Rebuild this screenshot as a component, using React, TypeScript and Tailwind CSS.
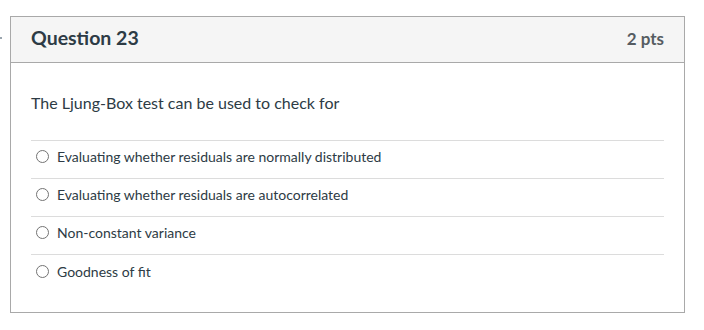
import React from "react";

const answers = [
  "Evaluating whether residuals are normally distributed",
  "Evaluating whether residuals are autocorrelated",
  "Non-constant variance",
  "Goodness of fit",
];

export default function App() {
  return (
    <div
      className="relative w-[704px] h-[330px] bg-white pt-[16px] pl-[10px]"
      style={{ fontFamily: "Lato, 'Noto Sans', sans-serif" }}
    >
      <div className="absolute left-0 top-[37px] w-[2px] h-[2px] bg-[#9aa5ae]" />
      <div className="w-[675px] border border-[#a9a9a9] bg-white">
        <div className="h-[46px] bg-[#f5f5f5] border-b border-[#a9a9a9] flex items-center justify-between px-[20px]">
          <span className="text-[19.5px] leading-[24px] font-bold text-[#2d3b45] mb-[4px]">Question 23</span>
          <span className="text-[17px] leading-[20px] font-bold text-[#555c62] mb-[1px]">2 pts</span>
        </div>
        <div className="px-[20px] pt-[28px] pb-[19px]">
          <div className="text-[16px] leading-[24px] text-[#2d3b45]">
            The Ljung-Box test can be used to check for
          </div>
          <div className="mt-[25px] border-t border-[#dcdcdc]">
            {answers.map((a, i) => (
              <div
                key={i}
                className={`h-[38px] flex items-center pl-[5px] pb-[6px] ${
                  i < answers.length - 1 ? "border-b border-[#dcdcdc]" : ""
                }`}
              >
                <span className="w-[13px] h-[13px] rounded-full border border-[#737373] bg-white shrink-0" />
                <span className="ml-[8px] text-[14px] text-[#2d3b45]">{a}</span>
              </div>
            ))}
          </div>
        </div>
      </div>
    </div>
  );
}
